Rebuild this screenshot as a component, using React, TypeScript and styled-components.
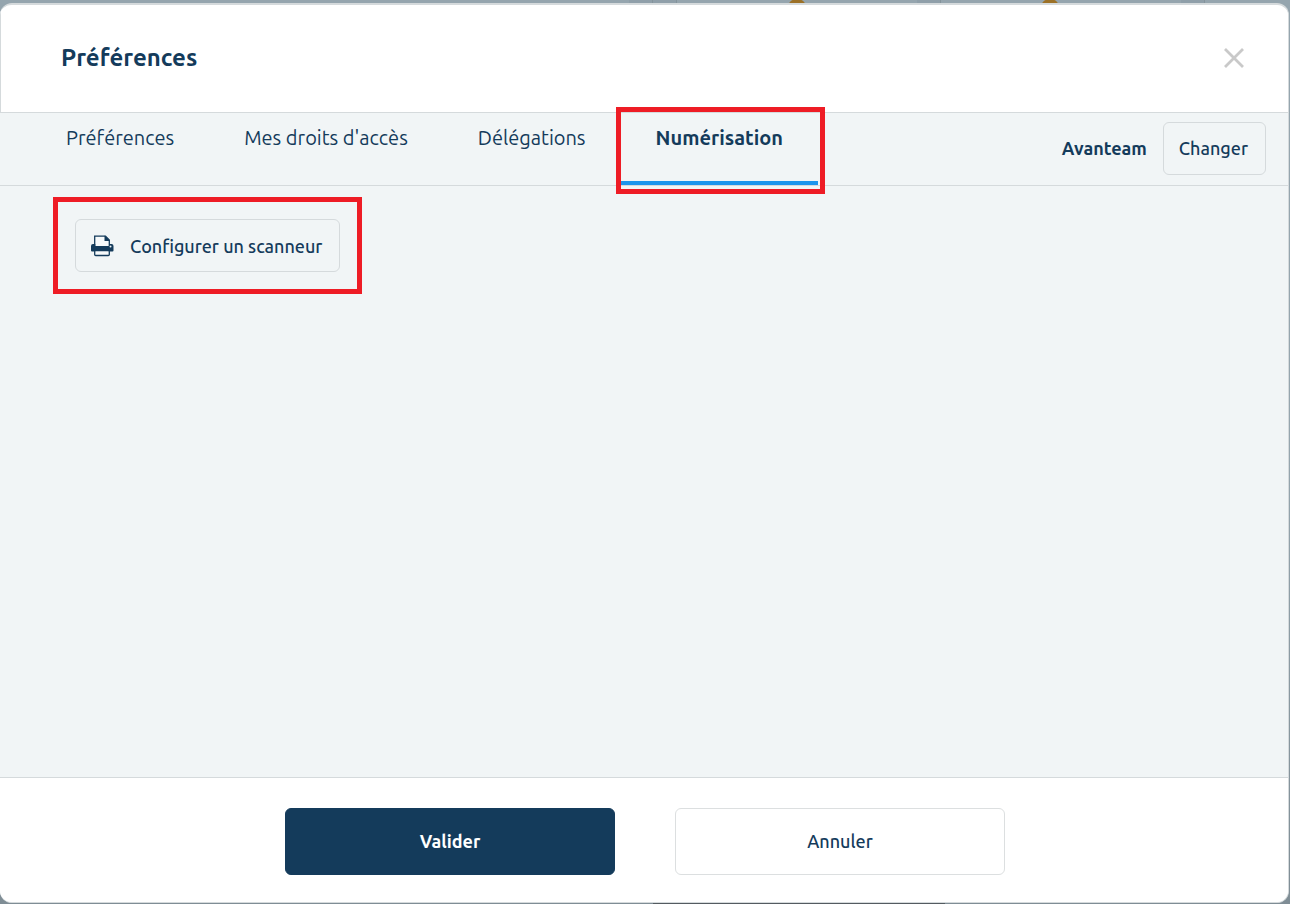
import React from "react";
import styled, { createGlobalStyle } from "styled-components";

const ink = "#143b5b";
const line = "#d5dadc";

const GlobalStyle = createGlobalStyle`
  *, *::before, *::after { box-sizing: border-box; }
  body { margin: 0; font-family: Ubuntu, "Noto Sans", sans-serif; color: ${ink}; }
  button { font-family: inherit; color: inherit; cursor: pointer; }
`;

const Backdrop = styled.div`
  position: relative;
  display: flex;
  min-height: 100vh;
  padding: 3px 1px 1px 0;
  overflow: hidden;
  background: linear-gradient(#95a5ae 50%, #7f8d95);
`;

const Strip = styled.span<{ $x: number }>`
  position: absolute;
  top: 0;
  left: ${(p) => p.$x}px;
  width: 24px;
  height: 20px;
  border-right: 1px solid #84939b;
  background: #8f9fa9;
`;

const Dot = styled.span<{ $x: number }>`
  position: absolute;
  top: -1px;
  left: ${(p) => p.$x}px;
  width: 20px;
  height: 20px;
  border-radius: 50%;
  background: #9c7127;
`;

const Band = styled.span`
  position: absolute;
  bottom: 0;
  left: 653px;
  width: 292px;
  height: 12px;
  background: #545b60;
`;

const Dialog = styled.section`
  position: relative;
  display: flex;
  flex: 1;
  flex-direction: column;
  border: 1px solid ${line};
  border-width: 2px 1px 1px 0;
  border-radius: 12px;
  overflow: hidden;
  background: #f1f5f6;
`;

const Header = styled.header`
  display: flex;
  align-items: center;
  justify-content: space-between;
  height: 108px;
  padding: 0 44px 2px 60px;
  border: solid ${line};
  border-width: 0 0 1px 1px;
  background: #fff;
`;

const Title = styled.h1`
  margin: 0;
  font-size: 24px;
  line-height: 32px;
  font-weight: 600;
`;

const Close = styled.button`
  display: flex;
  padding: 0;
  border: 0;
  background: none;
`;

const TabBar = styled.div`
  display: flex;
  justify-content: space-between;
  height: 73px;
  padding: 0 22px 0 31px;
  border-bottom: 1px solid ${line};
`;

const Tabs = styled.nav`
  display: flex;
`;

const Tab = styled.button<{ $active?: boolean }>`
  position: relative;
  padding: 0 35px 18px;
  border: 0;
  border-bottom: 4px solid ${(p) => (p.$active ? "#1c95ec" : "transparent")};
  background: none;
  font-size: 20px;
  line-height: 28px;
  font-weight: ${(p) => (p.$active ? 600 : 400)};
  white-space: nowrap;
`;

const TabMark = styled.span`
  position: absolute;
  inset: -6px -7px -13px -5px;
  border: 5px solid #ee1c25;
  pointer-events: none;
`;

const Account = styled.div`
  display: flex;
  align-items: center;
  gap: 16px;
  padding-bottom: 2px;
  font-size: 18px;
`;

const OutlineButton = styled.button`
  display: flex;
  align-items: center;
  gap: 15px;
  height: 53px;
  padding: 0 17px 0 15px;
  border: 1px solid ${line};
  border-radius: 6px;
  background: none;
  font-size: 18px;
  line-height: 24px;
  font-weight: 500;
  white-space: nowrap;
`;

const Content = styled.main`
  flex: 1;
  padding: 11px 53px;
`;

const ScannerMark = styled.div`
  display: inline-flex;
  padding: 17px;
  border: 5px solid #ee1c25;
`;

const Footer = styled.footer`
  display: flex;
  justify-content: center;
  gap: 60px;
  padding: 30px 0 27px 2px;
  border-top: 1px solid ${line};
  background: #fff;
`;

const Action = styled.button<{ $primary?: boolean }>`
  width: 330px;
  height: 67px;
  padding: 0 0 2px;
  border: 1px solid ${(p) => (p.$primary ? ink : "#dcdfe0")};
  border-radius: 6px;
  background: ${(p) => (p.$primary ? ink : "#fff")};
  color: ${(p) => (p.$primary ? "#fff" : ink)};
  font-size: 18px;
  line-height: 24px;
  font-weight: ${(p) => (p.$primary ? 600 : 500)};
`;

const PrinterIcon = () => (
  <svg width="24" height="24" viewBox="0 0 24 24" aria-hidden="true">
    <path d="M3.7 12V2.200H14.500L18.300 6V12" fill="#f7fafb" stroke={ink} strokeWidth="1.300" />
    <path d="M13.500 1.500v5.500H19z" fill={ink} />
    <path
      d="M2 10H4.300V12H18V10H20.500Q22.500 10 22.500 12V16.500Q22.500 17.500 21.500 17.500H1Q0 17.500 0 16.500V12Q0 10 2 10Z"
      fill={ink}
    />
    <circle cx="19.500" cy="12.500" r="1" fill="#f1f5f6" />
    <rect x="3.700" y="16.500" width="14.600" height="5" rx="1" fill="#f7fafb" stroke={ink} strokeWidth="1.300" />
  </svg>
);

const tabs = ["Préférences", "Mes droits d'accès", "Délégations", "Numérisation"];

export default function App() {
  return (
    <Backdrop>
      <GlobalStyle />
      <Strip $x={629} />
      <Strip $x={653} />
      <Strip $x={917} />
      <Strip $x={1181} />
      <Dot $x={787} />
      <Dot $x={1040} />
      <Band />
      <Dialog role="dialog" aria-labelledby="title">
        <Header>
          <Title id="title">Préférences</Title>
          <Close aria-label="Fermer">
            <svg width="20" height="20" viewBox="0 0 20 20" aria-hidden="true">
              <path d="M1 1l18 18M19 1L1 19" stroke="#c9c9c9" strokeWidth="2.8" />
            </svg>
          </Close>
        </Header>
        <TabBar>
          <Tabs>
            {tabs.map((label, i) => (
              <Tab key={label} $active={i === 3}>
                {label}
                {i === 3 && <TabMark />}
              </Tab>
            ))}
          </Tabs>
          <Account>
            <strong>Avanteam</strong>
            <OutlineButton>Changer</OutlineButton>
          </Account>
        </TabBar>
        <Content>
          <ScannerMark>
            <OutlineButton>
              <PrinterIcon />
              Configurer un scanneur
            </OutlineButton>
          </ScannerMark>
        </Content>
        <Footer>
          <Action $primary>Valider</Action>
          <Action>Annuler</Action>
        </Footer>
      </Dialog>
    </Backdrop>
  );
}
